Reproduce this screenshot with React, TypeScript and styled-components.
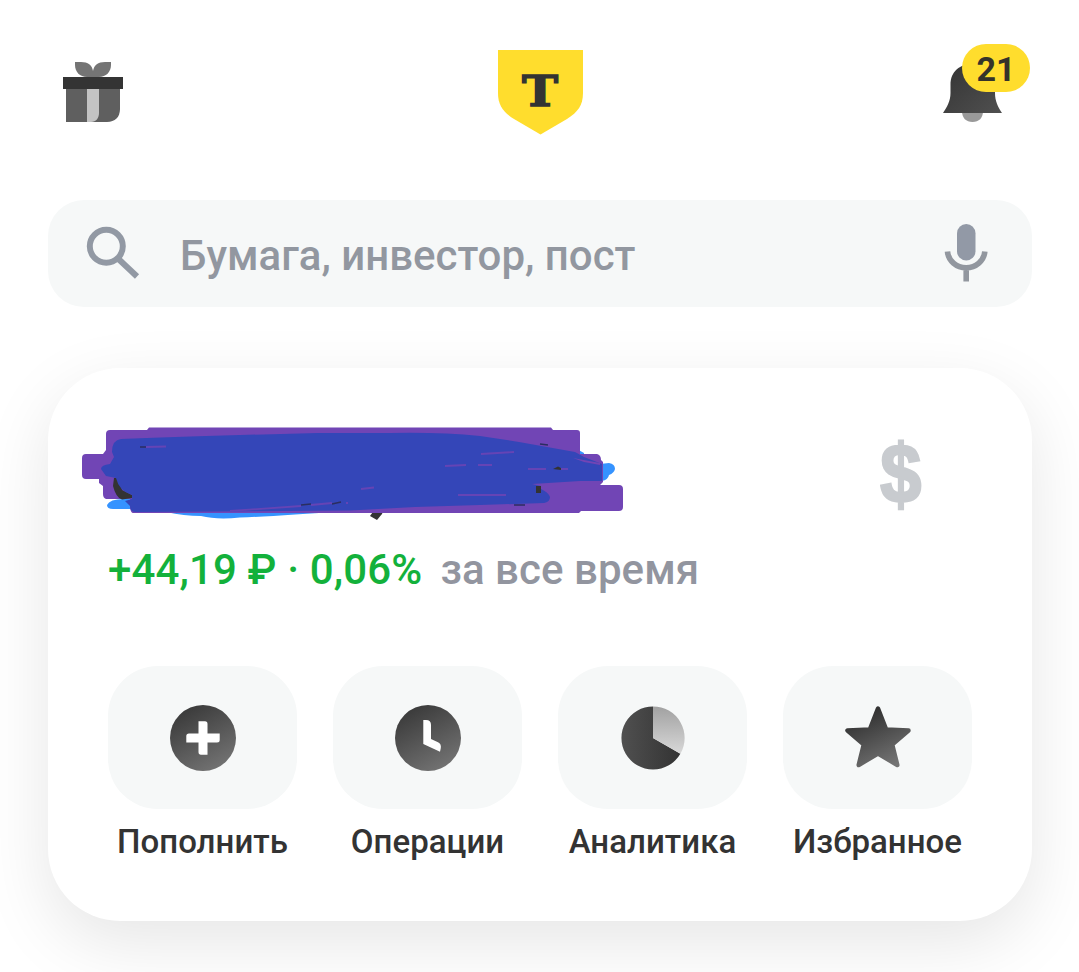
import React from "react";
import styled, { createGlobalStyle } from "styled-components";

const GlobalStyle = createGlobalStyle`
  * { box-sizing: border-box; }
  body { margin: 0; background: #fff; }
`;

const Page = styled.main`
  width: 1079px;
  height: 972px;
  overflow: hidden;
  padding: 0 47px 0 48px;
  display: flex;
  flex-direction: column;
  background: #fff;
  font-family: Roboto, "Noto Sans", sans-serif;
  font-weight: 500;
  color: #333;
`;

const Header = styled.header`
  height: 200px;
  flex: none;
  display: grid;
  grid-template-columns: 1fr 85px 1fr;
  align-items: start;
  padding: 50px 0 0;
`;

const GiftButton = styled.div`
  padding: 12px 0 0 15px;
  svg { display: block; }
`;

const Bell = styled.div`
  position: relative;
  justify-self: end;
  margin-right: 29px;
  padding-top: 12px;
  svg { display: block; }
`;

const Badge = styled.span`
  position: absolute;
  left: 19px;
  top: -6px;
  width: 68px;
  height: 48px;
  border-radius: 24px;
  background: #ffdd2d;
  font-size: 34px;
  font-weight: 700;
  line-height: 50px;
  text-align: center;
  color: #35332a;
`;

const Search = styled.div`
  height: 107px;
  flex: none;
  border-radius: 36px;
  background: #f6f8f8;
  display: flex;
  align-items: center;
  padding: 0 44px 0 38px;
  svg { display: block; flex: none; margin-bottom: 2px; }
`;

const Placeholder = styled.span`
  flex: 1;
  margin-left: 40px;
  padding-top: 5px;
  font-size: 42px;
  line-height: 50px;
  color: #9297a0;
`;

const Card = styled.section`
  height: 553px;
  flex: none;
  margin-top: 61px;
  border-radius: 72px;
  background: #fff;
  box-shadow: 0 22px 68px rgba(0, 0, 0, 0.1);
  padding: 59px 60px 0;
`;

const Balance = styled.div`
  height: 94px;
  display: flex;
  justify-content: space-between;
  margin-left: -26px;
  padding-right: 48px;
  svg { display: block; }
`;

const Currency = styled.span`
  font-family: "Liberation Sans", sans-serif;
  font-weight: 700;
  font-size: 82px;
  line-height: 94px;
  color: #c8cbcf;
  -webkit-text-stroke: 2.500px #c8cbcf;
  transform: scale(0.9, 1.02);
`;

const Profit = styled.div`
  margin-top: 24px;
  height: 50px;
  font-size: 42px;
  line-height: 50px;
  letter-spacing: 0.14px;
  color: #13b13b;
  white-space: pre;
`;

const Period = styled.span`
  margin-left: 18px;
  letter-spacing: 0.050px;
  color: #92959f;
`;

const Actions = styled.nav`
  margin-top: 71px;
  display: grid;
  grid-template-columns: repeat(4, 189px);
  gap: 36px;
`;

const Action = styled.div`
  display: flex;
  flex-direction: column;
  align-items: center;
`;

const Tile = styled.div`
  width: 189px;
  height: 143px;
  border-radius: 50px;
  background: #f6f8f8;
  display: grid;
  place-items: center;
  svg { display: block; }
`;

const Label = styled.span`
  margin-top: 13px;
  font-size: 33px;
  line-height: 40px;
  letter-spacing: 0.030px;
  white-space: nowrap;
`;

const GiftIcon = () => (
  <svg width="60" height="60" viewBox="0 0 60 60">
    <path d="M12 0H18C25 0 29 3 30 9C31 3 35 0 42 0H48V3C48 10 43 15 36 15H24C17 15 12 10 12 3Z" fill="#747474" />
    <path d="M3 27H57V47C57 55 52 60 44 60H3Z" fill="#5f5f5f" />
    <path d="M24 27H36V51C36 56 33 60 28 60H24Z" fill="#c3c3c3" />
    <rect y="15" width="60" height="12" fill="#343434" />
  </svg>
);

const Logo = () => (
  <svg width="85" height="85" viewBox="0 0 85 85">
    <path d="M0 0H85V43C85 55 80 62 69 69L42.5 84.5L16 69C5 62 0 55 0 43Z" fill="#ffdd2d" />
    <text
      transform="translate(42 56.300) scale(1.130 1)"
      textAnchor="middle"
      fontFamily="DejaVu Serif"
      fontWeight="700"
      fontSize="43"
      fill="#333"
      stroke="#333"
      strokeWidth="1.400"
    >T</text>
  </svg>
);

const BellIcon = () => (
  <svg width="60" height="60" viewBox="0 0 60 60">
    <defs>
      <linearGradient id="bell" x1="0" y1="0" x2="1" y2="1">
        <stop offset="0" stopColor="#333" />
        <stop offset="1" stopColor="#505050" />
      </linearGradient>
    </defs>
    <path d="M19 49H40C40 56 36 60 29.500 60S19 56 19 49Z" fill="#999" />
    <path d="M0 51C4 45 7.500 39 7.500 31V23C7.500 9 17 2 30 2S52 9 52 23V31C52 39 55 45 59 51Z" fill="url(#bell)" />
  </svg>
);

const SearchIcon = () => (
  <svg width="54" height="54" viewBox="0 0 54 54" fill="none" stroke="#9299a4" strokeWidth="6">
    <circle cx="20.300" cy="20.300" r="16.500" />
    <path d="M33 33.500L51 50.500" />
  </svg>
);

const MicIcon = () => (
  <svg width="44" height="58" viewBox="0 0 44 58">
    <rect x="13" y="0" width="18.500" height="36.500" rx="9.250" fill="#9299a6" />
    <path d="M3.500 27.500A18.700 17.500 0 0 0 40.800 27.500M22.200 45V57.500" fill="none" stroke="#92979f" strokeWidth="5.600" />
  </svg>
);

const Scribble = () => (
  <svg width="542" height="94" viewBox="82 427 542 94">
    <path d="M107 505Q110 498 128 499L320 507L345 511Q280 516 240 517.500Q217 520 201 516Q184 516 166 512L140 509H113Q107 509 107 505Z" fill="#3593ff" />
    <path d="M575 448L584 453V458L600 464L609 463Q615 464 615 469Q614 473 609 475Q608 480 602 481L590 478Z" fill="#3593ff" />
    <path d="M370 516L375 509L384 509L382 514L377 520Z" fill="#333" />
    <path d="M110 430H147L149 427.500H551L553 430H577Q580 430 580 433V454H597Q601 455 601 460L603 462V482L600 485H619Q623 485 623 489V507Q623 511 619 511H581L579 513H133Q131 513 130 508V499H106Q103 498 103 494V486L99 483V479H86Q82 479 82 475V458Q82 454 86 454H103L106 450V434Q106 430 110 430Z" fill="#7145b5" />
    <path d="M114 478L113 486Q116 498 122 499.500L132 498V495L122 490L119 478Z" fill="#333" />
    <path d="M121 439Q112 440 112 452L114 457L110 464Q101 465 101 469L106 476L116 478Q119 491 132 495V499L125 501L130 506Q130 512 136 512L350 510.500L415 507L480 505L544 503Q550 502 550 497Q548 492 541 489V486L532 484L580 481H602V464L584 457L575 452L519 442L480 436Q440 432 390 433H318L240 435Q170 437 121 439Z" fill="#3446b8" />
    <path d="M140 447H146M301 505L311 504M332 504L341 502M540 444L548 445M514 505H525" stroke="#2b2e60" strokeWidth="1.500" />
    <path d="M146 447L166 446.500M361 489L374 487.500M458 495H506M445 466L466 465M478 465H492M481 454L514 452M528 469H546M560 469H568M230 511L301 506M311 505L332 503M346 503H348" fill="none" stroke="#6544b5" strokeWidth="1.800" />
    <path d="M573 458L600 463V465L584 462Z" fill="#7145b5" />
    <path d="M536 486H541V493H536ZM553 469L558 466.500L561 468V470Z" fill="#333" />
  </svg>
);

const DiscGradient = ({ id }: { id: string }) => (
  <defs>
    <linearGradient id={id} x1="0.150" y1="0" x2="0.700" y2="1">
      <stop offset="0" stopColor="#363636" />
      <stop offset="1" stopColor="#737373" />
    </linearGradient>
  </defs>
);

const PlusIcon = () => (
  <svg width="66" height="66" viewBox="0 0 66 66">
    <DiscGradient id="plus" />
    <circle cx="33" cy="33" r="33" fill="url(#plus)" />
    <path d="M28.500 16.200H35Q37.500 16.200 37.500 19V28.500H49.700V35Q49.700 37.500 47 37.500H37.500V49.700H31Q28.500 49.700 28.500 47V37.500H16.300V31Q16.300 28.500 19 28.500H28.500Z" fill="#fff" />
  </svg>
);

const ClockIcon = () => (
  <svg width="66" height="66" viewBox="0 0 66 66">
    <DiscGradient id="clock" />
    <circle cx="33" cy="33" r="33" fill="url(#clock)" />
    <path d="M28.300 15H31Q36 15 36 20V34L43 37.200Q46.500 39 45.800 43L45 46.700L28.300 39Z" fill="#fff" />
  </svg>
);

const PieIcon = () => (
  <svg width="64" height="64" viewBox="0 0 64 64">
    <defs>
      <linearGradient id="pieDark">
        <stop offset="0" stopColor="#505050" />
        <stop offset="1" stopColor="#333" />
      </linearGradient>
      <linearGradient id="pieLight" x2="0" y2="1">
        <stop offset="0" stopColor="#a1a1a1" />
        <stop offset="1" stopColor="#d8d8d8" />
      </linearGradient>
    </defs>
    <path d="M32 32V.400A31.600 31.600 0 1 0 59.400 47.800Z" fill="url(#pieDark)" />
    <path d="M32 32V.400A31.600 31.600 0 0 1 59.400 47.800Z" fill="url(#pieLight)" />
  </svg>
);

const StarIcon = () => (
  <svg width="66" height="66" viewBox="0 0 66 66">
    <defs>
      <linearGradient id="star" x1="0.300" y1="0.100" x2="0.750" y2="1">
        <stop offset="0" stopColor="#333" />
        <stop offset="1" stopColor="#747474" />
      </linearGradient>
    </defs>
    <path d="M33 3.500L41.200 24.500L63.500 25.500L47.200 39.500L52.300 60L33 48.500L13.700 60L18.800 39.500L2.500 25.500L24.800 24.500Z" fill="url(#star)" stroke="url(#star)" strokeWidth="4.500" strokeLinejoin="round" />
  </svg>
);

const actions = [
  { label: "Пополнить", Icon: PlusIcon },
  { label: "Операции", Icon: ClockIcon },
  { label: "Аналитика", Icon: PieIcon },
  { label: "Избранное", Icon: StarIcon },
];

export default function App() {
  return (
    <>
      <GlobalStyle />
      <Page>
        <Header>
          <GiftButton><GiftIcon /></GiftButton>
          <Logo />
          <Bell>
            <BellIcon />
            <Badge>21</Badge>
          </Bell>
        </Header>
        <Search>
          <SearchIcon />
          <Placeholder>Бумага, инвестор, пост</Placeholder>
          <MicIcon />
        </Search>
        <Card>
          <Balance>
            <Scribble />
            <Currency>$</Currency>
          </Balance>
          <Profit>
            +44,19 ₽ · 0,06%<Period>за все время</Period>
          </Profit>
          <Actions>
            {actions.map(({ label, Icon }) => (
              <Action key={label}>
                <Tile><Icon /></Tile>
                <Label>{label}</Label>
              </Action>
            ))}
          </Actions>
        </Card>
      </Page>
    </>
  );
}
